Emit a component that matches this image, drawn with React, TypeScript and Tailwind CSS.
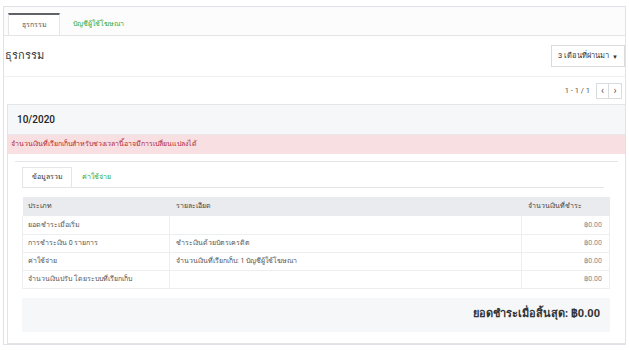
const rows = [
  { type: "ยอดชำระเมื่อเริ่ม", detail: "", amount: "฿0.00" },
  { type: "การชำระเงิน 0 รายการ", detail: "ชำระเงินด้วยบัตรเครดิต", amount: "฿0.00" },
  { type: "ค่าใช้จ่าย", detail: "จำนวนเงินที่เรียกเก็บ: 1 บัญชีผู้ใช้โฆษณา", amount: "฿0.00" },
  { type: "จำนวนเงินปรับ โดยระบบที่เรียกเก็บ", detail: "", amount: "฿0.00" },
];

export default function App() {
  return (
    <div className="w-[629px] h-[350px] bg-white overflow-hidden font-['Roboto','Noto_Sans',sans-serif] text-[#555]">
      <div className="ml-[3px] mt-[6px] w-[623px] h-[339px] border border-[#dfe2e6] flex flex-col">
        {/* top tabs */}
        <div className="h-[29px] pl-[4px] pt-[7px] flex items-end border-b border-[#e3e5e8] bg-[#fcfcfc]">
          <div className="h-[22px] w-[52px] flex items-center justify-center bg-white border-x border-[#e3e5e8] border-t-2 border-t-[#5f6368] text-[7px] text-[#555]">
            ธุรกรรม
          </div>
          <div className="h-[22px] ml-[13px] flex items-center text-[7px] text-[#2eaa3a]">บัญชีผู้ใช้โฆษณา</div>
        </div>

        {/* heading */}
        <div className="h-[41px] flex items-center justify-between border-b border-[#eef0f2] pl-[1px]">
          <h1 className="text-[11px] font-medium text-[#333]">ธุรกรรม</h1>
          <button className="h-[22px] w-[74px] border border-[#d9dcdf] bg-white text-[7.5px] text-[#333] flex items-center justify-center gap-[3px]">
            3 เดือนที่ผ่านมา <span className="text-[6px]">▼</span>
          </button>
        </div>

        {/* pager */}
        <div className="h-[27px] flex items-center justify-end pr-[3px] gap-[6px] text-[7.5px] text-[#555]">
          <span>1 - 1 / 1</span>
          <div className="flex border border-[#d9dcdf] h-[16px]">
            <span className="w-[12px] flex items-center justify-center text-[10px] leading-none border-r border-[#d9dcdf]">‹</span>
            <span className="w-[12px] flex items-center justify-center text-[10px] leading-none">›</span>
          </div>
        </div>

        {/* card */}
        <div className="ml-[3px] flex-1 border border-[#e3e5e8] border-r-0 flex flex-col">
          <div className="h-[30px] bg-[#f6f7f9] flex items-center pl-[9px] text-[10px] font-medium text-[#222] border-b border-[#e6e8eb]">
            10/2020
          </div>
          <div className="h-[19px] bg-[#f8dfe2] flex items-center pl-[3px] text-[7px] text-[#b3282d]">
            จำนวนเงินที่เรียกเก็บสำหรับช่วงเวลานี้อาจมีการเปลี่ยนแปลงได้
          </div>

          <div className="mx-[7px] mt-[7px] border-t border-[#e3e5e8] flex flex-col px-[7px]">
            {/* inner tabs */}
            <div className="mt-[6px] mr-[7px] h-[20px] flex items-end border-b border-[#e3e5e8]">
              <div className="h-[20px] w-[50px] flex items-center justify-center border-x border-t border-[#e3e5e8] bg-white text-[7px] text-[#333]">
                ข้อมูลรวม
              </div>
              <div className="h-[20px] ml-[10px] flex items-center text-[7px] text-[#2eaa3a]">ค่าใช้จ่าย</div>
            </div>

            {/* table */}
            <table className="mt-[9px] w-[588px] border-collapse text-[7px] text-[#555]">
              <thead>
                <tr className="h-[19px] bg-[#e9ebee] text-[#444]">
                  <th className="w-[147px] text-left font-normal pl-[5px]">ประเภท</th>
                  <th className="w-[352px] text-left font-normal pl-[6px]">รายละเอียด</th>
                  <th className="text-left font-normal pl-[6px]">จำนวนเงินที่ชำระ</th>
                </tr>
              </thead>
              <tbody>
                {rows.map((r) => (
                  <tr key={r.type} className="h-[18px] border-b border-[#eceef0]">
                    <td className="pl-[5px] border-l border-[#eceef0]">{r.type}</td>
                    <td className="pl-[6px] border-l border-[#eceef0]">{r.detail}</td>
                    <td className="pr-[7px] text-right border-x border-[#eceef0] text-[#888]">{r.amount}</td>
                  </tr>
                ))}
              </tbody>
            </table>

            {/* summary */}
            <div className="mt-[9px] w-[588px] h-[34px] bg-[#f6f7f9] flex items-center justify-end pr-[10px] text-[11px] font-bold text-[#333]">
              ยอดชำระเมื่อสิ้นสุด: ฿0.00
            </div>
          </div>
        </div>
      </div>
    </div>
  );
}
